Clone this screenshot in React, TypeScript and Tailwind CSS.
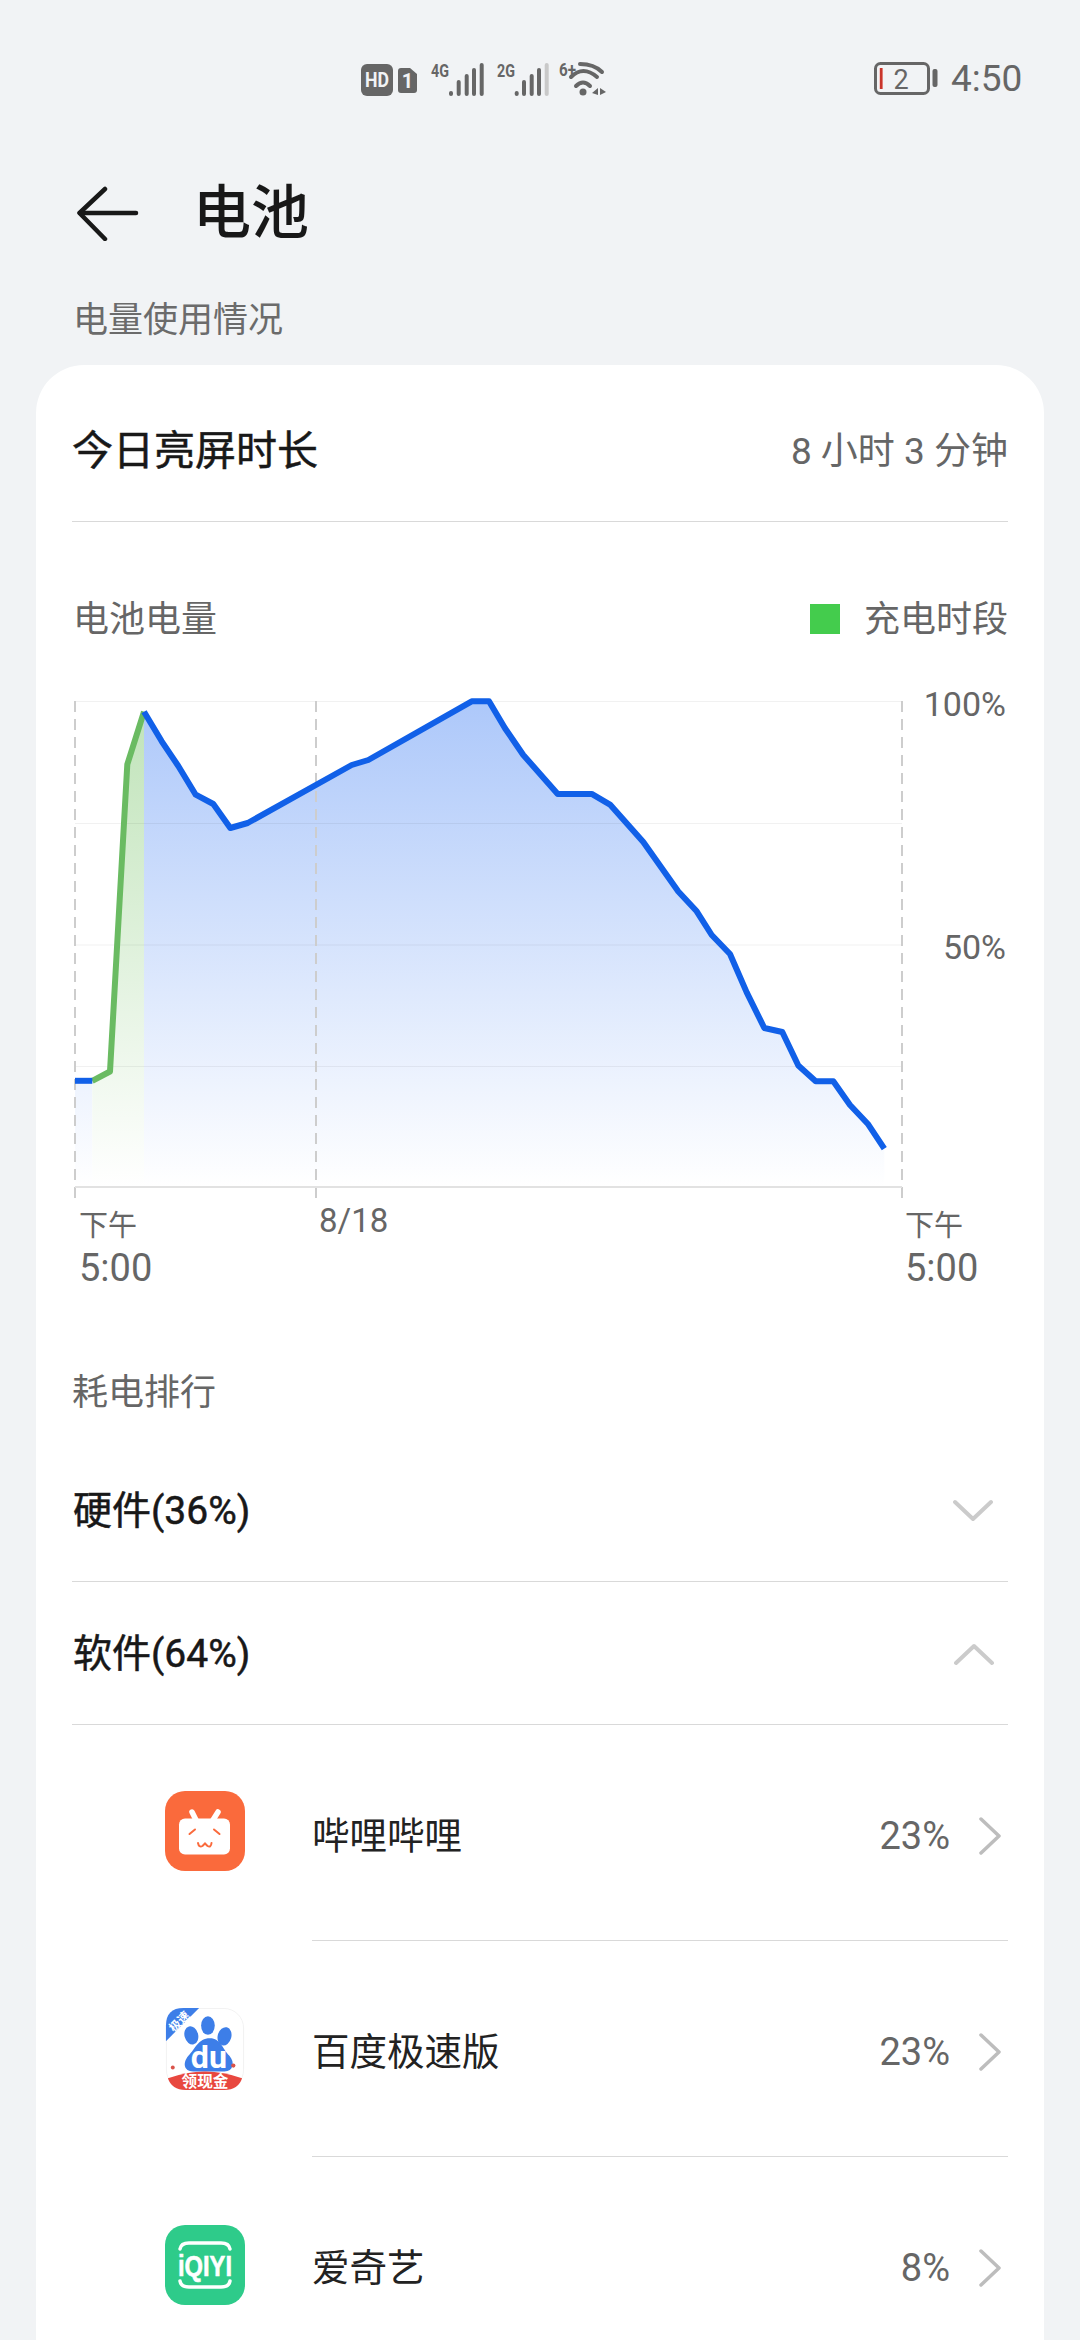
const BLUE_RIGHT: [number, number][] = [
  [144, 711.7], [161.7, 741.3], [178.3, 766], [195.7, 794.7], [213.3, 804], [230.3, 828], [247.7, 823],
  [351.7, 765], [368.3, 760], [471.7, 701.3], [489, 701.3], [505, 728.2], [523.3, 755], [557.7, 793.9],
  [591.7, 793.9], [610, 804.6], [643.3, 842], [678.3, 891.5], [696.7, 911.3], [711.7, 935], [730, 954],
  [746.7, 992.4], [764.3, 1028], [782.3, 1032], [798.3, 1065.5], [815.7, 1081.3], [833.3, 1081.3],
  [850, 1105], [867.7, 1123.7], [884.3, 1148.6],
];
const GREEN: [number, number][] = [[92.3, 1080.8], [110, 1071.5], [127.3, 764.4], [144, 711.7]];

function pts(list: [number, number][]) {
  return list.map(([x, y]) => `${x},${y}`).join(" ");
}

function StatusIcons() {
  const bars = (x: number[], lastLight: boolean) =>
    x.map((bx, i) => (
      <line
        key={bx}
        x1={bx}
        x2={bx}
        y1={[92, 81, 75, 69, 64][i]}
        y2={93}
        stroke={lastLight && i === 4 ? "#c9c9c9" : "#666"}
        strokeWidth={4}
        strokeLinecap="round"
      />
    ));
  return (
    <svg width="255" height="45" viewBox="355 55 255 45" className="ml-[355px]">
      <rect x="361" y="63" width="32" height="32" rx="6" fill="#666" />
      <text x="377" y="86" textAnchor="middle" fontSize="20" fontWeight="700" fill="#f1f3f5" textLength="24" lengthAdjust="spacingAndGlyphs" fontFamily="Roboto">HD</text>
      <path d="M401 67h9l7 6v16a3 3 0 0 1-3 3h-13a3 3 0 0 1-3-3V70a3 3 0 0 1 3-3z" fill="#666" />
      <text x="407.5" y="87" textAnchor="middle" fontSize="20" fontWeight="700" fill="#f1f3f5" fontFamily="Roboto">1</text>
      <text x="431" y="76" fontSize="18" fontWeight="700" fill="#666" textLength="18" lengthAdjust="spacingAndGlyphs" fontFamily="Roboto">4G</text>
      {bars([451, 458.7, 466.7, 474, 481.7], false)}
      <text x="497" y="76" fontSize="18" fontWeight="700" fill="#666" textLength="18" lengthAdjust="spacingAndGlyphs" fontFamily="Roboto">2G</text>
      {bars([516.7, 524, 531.7, 539, 546.7], true)}
      <text x="559" y="75" fontSize="19" fontWeight="700" fill="#666" textLength="17" lengthAdjust="spacingAndGlyphs" fontFamily="Roboto">6+</text>
      <g fill="none" stroke="#666" strokeWidth="4" strokeLinecap="round">
        <path d="M580 63Q594 63 602 71" />
        <path d="M571 76Q583 64 597 76" />
        <path d="M576 85Q583 78 590 85" />
      </g>
      <circle cx="583" cy="91" r="3.5" fill="#666" />
      <path d="M592 92l6-5v7zM600 87l6 4-6 3z" fill="#666" />
    </svg>
  );
}

function Battery() {
  return (
    <svg width="64" height="36" viewBox="874 61 64 36">
      <rect x="875.5" y="64.5" width="53" height="30" rx="5" fill="none" stroke="#666" strokeWidth="3" />
      <rect x="932.5" y="70" width="5" height="18" rx="2" fill="#666" />
      <rect x="879" y="69" width="4" height="21" fill="#f6c9c6" />
      <rect x="880" y="69" width="2.5" height="21" fill="#c8352b" />
      <text x="901" y="90" textAnchor="middle" fontSize="27" fill="#666" fontFamily="Roboto">2</text>
    </svg>
  );
}

function BiliIcon() {
  return (
    <svg width="80" height="80" viewBox="0 0 80 80">
      <rect width="80" height="80" rx="20" fill="#fa6a3c" />
      <g stroke="#fff" strokeWidth="5.5" strokeLinecap="round">
        <line x1="27" y1="21" x2="31" y2="29" />
        <line x1="53" y1="21" x2="48" y2="29" />
      </g>
      <rect x="14" y="27.5" width="51" height="36" rx="6" fill="#fff" />
      <g fill="none" stroke="#fa6a3c" strokeWidth="2" strokeLinecap="round">
        <path d="M24.5 43L30 38.5" />
        <path d="M49 38.5L54.5 43" />
        <path d="M33 52Q34 57 37.5 55Q39 53.5 40 52.5Q41 53.5 42.5 55Q46 57 46.5 52" />
      </g>
    </svg>
  );
}

function BaiduIcon() {
  return (
    <svg width="80" height="82" viewBox="0 0 80 84">
      <rect x="0.5" y="0.5" width="79" height="83" rx="20" fill="#fff" stroke="#f2f2f2" />
      <g fill="#3d7ee8">
        <ellipse cx="26" cy="28" rx="7" ry="9.5" transform="rotate(-15 26 28)" />
        <ellipse cx="43" cy="18" rx="7" ry="9.5" />
        <ellipse cx="60" cy="29" rx="7" ry="9.5" transform="rotate(15 60 29)" />
        <path d="M45 31C56 31 58 42 65 49C71 56 69 65 60 65H28C18 65 17 56 23 49C30 42 33 31 45 31Z" />
        <path d="M0 34V18Q0 0 18 0H34Z" />
      </g>
      <text x="14" y="18" textAnchor="middle" fontSize="12" fontWeight="700" fill="#fff" transform="rotate(-45 14 14)">极速</text>
      <text x="44" y="61" textAnchor="middle" fontSize="33" fontWeight="700" fill="#fff" fontFamily="Roboto">du</text>
      <circle cx="7" cy="61" r="2" fill="#d9534a" />
      <circle cx="69" cy="59" r="2.2" fill="#d9534a" />
      <path d="M2 72Q40 58 78 72Q74 84 60 84H20Q6 84 2 72Z" fill="#e8483f" />
      <text x="40" y="81" textAnchor="middle" fontSize="16" fontWeight="700" fill="#fff">领现金</text>
    </svg>
  );
}

function IqiyiIcon() {
  return (
    <svg width="80" height="80" viewBox="0 0 80 80">
      <rect width="80" height="80" rx="20" fill="#2ecb8a" />
      <g fill="none" stroke="#fff" strokeWidth="3.5" strokeLinecap="round">
        <path d="M15 24Q16 18 24 18H56Q64 18 65 24" />
        <path d="M15 56Q16 62 24 62H56Q64 62 65 56" />
      </g>
      <text x="13" y="51" fontSize="29" fontWeight="700" fill="#fff" stroke="#fff" strokeWidth="0.6" textLength="54" lengthAdjust="spacingAndGlyphs" fontFamily="Liberation Sans">iQIYI</text>
    </svg>
  );
}

const APPS = [
  { name: "哔哩哔哩", pct: "23%", icon: <BiliIcon />, iconClass: "pb-[4px]" },
  { name: "百度极速版", pct: "23%", icon: <BaiduIcon />, iconClass: "" },
  { name: "爱奇艺", pct: "8%", icon: <IqiyiIcon />, iconClass: "" },
];

function Chart() {
  return (
    <svg width="840" height="525" viewBox="70 680 840 525" className="-ml-[2px] shrink-0">
      <defs>
        <linearGradient id="blueFill" gradientUnits="userSpaceOnUse" x1="0" y1="701" x2="0" y2="1187">
          <stop offset="0" stopColor="#adc8fa" />
          <stop offset="1" stopColor="#ffffff" />
        </linearGradient>
        <linearGradient id="greenFill" gradientUnits="userSpaceOnUse" x1="0" y1="701" x2="0" y2="1187">
          <stop offset="0" stopColor="#bfe3b8" />
          <stop offset="1" stopColor="#ffffff" />
        </linearGradient>
      </defs>
      <polygon points="75,1080.8 92.3,1080.8 92.3,1187 75,1187" fill="url(#blueFill)" />
      <polygon points={`92.3,1187 ${pts(GREEN)} 144,1187`} fill="url(#greenFill)" />
      <polygon points={`144,1187 ${pts(BLUE_RIGHT)} 884.3,1187`} fill="url(#blueFill)" />
      {[701, 823, 944.5, 1066].map((y) => (
        <line key={y} x1="75" x2="902" y1={y + 0.5} y2={y + 0.5} stroke="#000" strokeOpacity="0.055" strokeWidth="1" />
      ))}
      {[75, 316, 902].map((x) => (
        <line key={x} x1={x} x2={x} y1="701" y2="1203" stroke="#cdcdcd" strokeWidth="2" strokeDasharray="11 7" />
      ))}
      <line x1="75" x2="902" y1="1187" y2="1187" stroke="#e2e2e2" strokeWidth="2" />
      <polyline points={pts(GREEN)} fill="none" stroke="#6abb62" strokeWidth="6" strokeLinejoin="round" />
      <polyline points="75,1080.8 92.3,1080.8" fill="none" stroke="#1160e8" strokeWidth="6" />
      <polyline points={pts(BLUE_RIGHT)} fill="none" stroke="#1160e8" strokeWidth="6" strokeLinejoin="round" />
    </svg>
  );
}

export default function App() {
  return (
    <div className="h-[2340px] w-[1080px] overflow-hidden bg-[#f1f3f5] font-['Roboto','Noto_Sans_CJK_SC',sans-serif]">
      {/* status bar */}
      <div className="flex h-[156px] items-center">
        <StatusIcons />
        <div className="ml-[264px] flex items-center">
          <Battery />
          <span className="ml-[13px] text-[37px] leading-none text-[#666]">4:50</span>
        </div>
      </div>

      {/* title */}
      <div className="flex h-[114px] items-center pl-[75px]">
        <svg width="66" height="56" viewBox="75 181 66 56" fill="none" stroke="#181818" strokeWidth="4.5" strokeLinecap="round" strokeLinejoin="round">
          <path d="M105 185L79.5 209L105 235" />
          <path d="M80 209H136" />
        </svg>
        <span className="ml-[52px] text-[58px] leading-none font-medium text-[#181818]">电池</span>
      </div>
      <div className="h-[95px] pt-[33px] pl-[73px] text-[35px] leading-[36px] text-[#6b6b6b]">电量使用情况</div>

      {/* card */}
      <div className="mx-[36px] rounded-t-[48px] bg-white px-[36px]">
        <div className="flex h-[157px] items-center justify-between border-b border-[#d9d9d9] pt-[18px]">
          <span className="text-[41px] text-[#181818] [-webkit-text-stroke:0.5px_#181818]">今日亮屏时长</span>
          <span className="text-[37px] text-[#666]">8 小时 3 分钟</span>
        </div>

        <div className="flex h-[158px] items-start justify-between pt-[80px] pl-[1px] text-[36px] leading-[36px] text-[#666]">
          <span>电池电量</span>
          <span className="flex items-center">
            <span className="mr-[24px] -mt-[3px] h-[30px] w-[30px] bg-[#44cc4d]" />
            充电时段
          </span>
        </div>

        <div className="flex">
          <Chart />
          <div className="flex-1 pt-[4px] pr-[2px] text-right text-[34px] leading-[40px] text-[#666]">
            <div>100%</div>
            <div className="mt-[203px]">50%</div>
          </div>
        </div>

        <div className="flex pl-[7px] text-[#666]">
          <div className="w-[240px] pt-[3px]">
            <div className="text-[29px] leading-[36px]">下午</div>
            <div className="mt-[2px] text-[38px] leading-[44px]">5:00</div>
          </div>
          <div className="-mt-[2px] w-[586px] text-[33px] leading-[36px]">8/18</div>
          <div className="pt-[3px]">
            <div className="text-[29px] leading-[36px]">下午</div>
            <div className="mt-[2px] text-[38px] leading-[44px]">5:00</div>
          </div>
        </div>

        <div className="h-[151px] pt-[85px] text-[36px] leading-[36px] text-[#666]">耗电排行</div>

        <div className="flex h-[141px] items-center justify-between border-b border-[#d9d9d9] pl-px">
          <span className="text-[39px] text-[#181818] [-webkit-text-stroke:0.5px_#181818]">硬件(36%)</span>
          <svg width="40" height="24" viewBox="0 0 40 24" className="mr-[15px]" fill="none" stroke="#cbcbcb" strokeWidth="4" strokeLinecap="round" strokeLinejoin="round">
            <path d="M2 3L20 20L38 3" />
          </svg>
        </div>
        <div className="flex h-[143px] items-center justify-between border-b border-[#d9d9d9] pt-[2px] pl-px">
          <span className="text-[39px] text-[#181818] [-webkit-text-stroke:0.5px_#181818]">软件(64%)</span>
          <svg width="40" height="24" viewBox="0 0 40 24" className="mr-[14px]" fill="none" stroke="#cbcbcb" strokeWidth="4" strokeLinecap="round" strokeLinejoin="round">
            <path d="M2 21L20 4L38 21" />
          </svg>
        </div>

        {APPS.map((app) => (
          <div key={app.name} className="flex h-[216px]">
            <div className={"flex w-[240px] shrink-0 items-center pl-[93px] " + app.iconClass}>{app.icon}</div>
            <div className="flex flex-1 items-center border-b border-[#d9d9d9] pt-[7px]">
              <span className="flex-1 text-[37.5px] text-[#222]">{app.name}</span>
              <span className="text-[38px] text-[#666]">{app.pct}</span>
              <svg width="24" height="38" viewBox="0 0 24 38" className="mr-[6px] ml-[28px]" fill="none" stroke="#bdbdbd" strokeWidth="3.5" strokeLinecap="round" strokeLinejoin="round">
                <path d="M3 2L21 19L3 36" />
              </svg>
            </div>
          </div>
        ))}
      </div>
    </div>
  );
}
